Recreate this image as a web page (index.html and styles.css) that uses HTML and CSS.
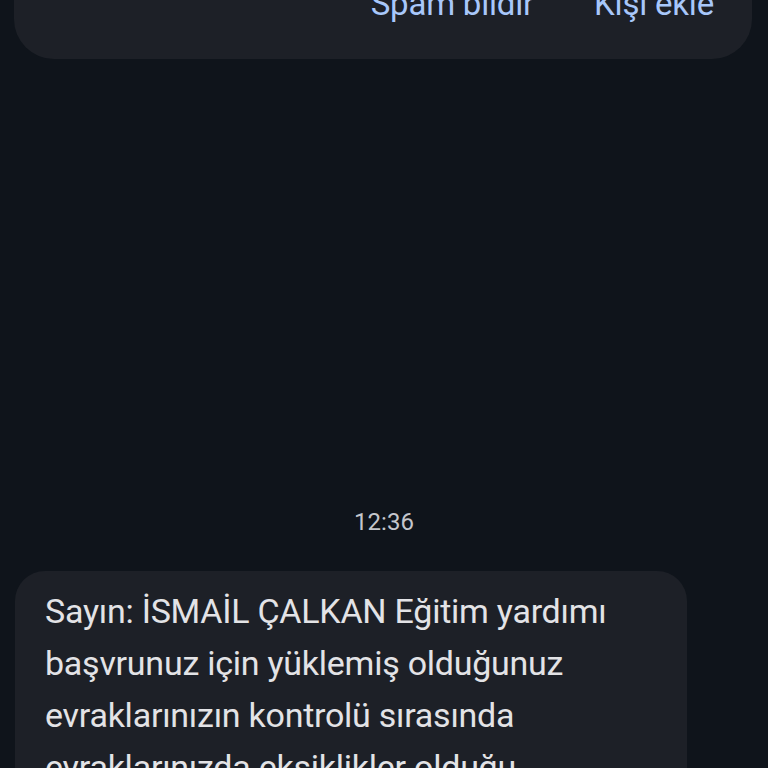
FILE: index.html
```html
<!DOCTYPE html>
<html lang="tr">
<head>
    <meta charset="UTF-8">
    <meta name="viewport" content="width=device-width, initial-scale=1.0">
    <title>Mesajlar</title>
    <link rel="stylesheet" href="styles.css">
</head>
<body>
    <div class="sender-card">
        <div class="actions">
            <span class="action">Spam bildir</span>
            <span class="action">Kişi ekle</span>
        </div>
    </div>
    <div class="thread">
        <div class="timestamp">12:36</div>
        <div class="bubble">
            Sayın: İSMAİL ÇALKAN Eğitim yardımı başvrunuz için yüklemiş olduğunuz evraklarınızın kontrolü sırasında evraklarınızda eksiklikler olduğu görülmüştür.
        </div>
    </div>
</body>
</html>
```

FILE: styles.css
```css
html, body {
    margin: 0;
    height: 100%;
    overflow: hidden;
}
body {
    background-color: #0f141b;
    font-family: Roboto, "Noto Sans", sans-serif;
}
.sender-card {
    margin: 0 16px 0 14px;
    height: 59px;
    background-color: #1d2027;
    border-radius: 0 0 40px 40px;
    overflow: hidden;
}
.actions {
    display: flex;
    justify-content: flex-end;
    gap: 60px;
    padding-right: 38px;
    margin-top: -17px;
}
.action {
    color: #a8c7fa;
    font-size: 33px;
    line-height: 42px;
    letter-spacing: -0.2px;
}
.thread {
    padding: 0 15px;
}
.timestamp {
    margin-top: 448px;
    text-align: center;
    color: #c4c6cc;
    font-size: 24px;
    line-height: 30px;
}
.bubble {
    margin-top: 34px;
    width: 612px;
    padding: 14px 30px;
    background-color: #1d2027;
    border-radius: 30px;
    color: #e3e3e6;
    font-size: 34px;
    line-height: 52px;
    letter-spacing: -0.25px;
}
```
